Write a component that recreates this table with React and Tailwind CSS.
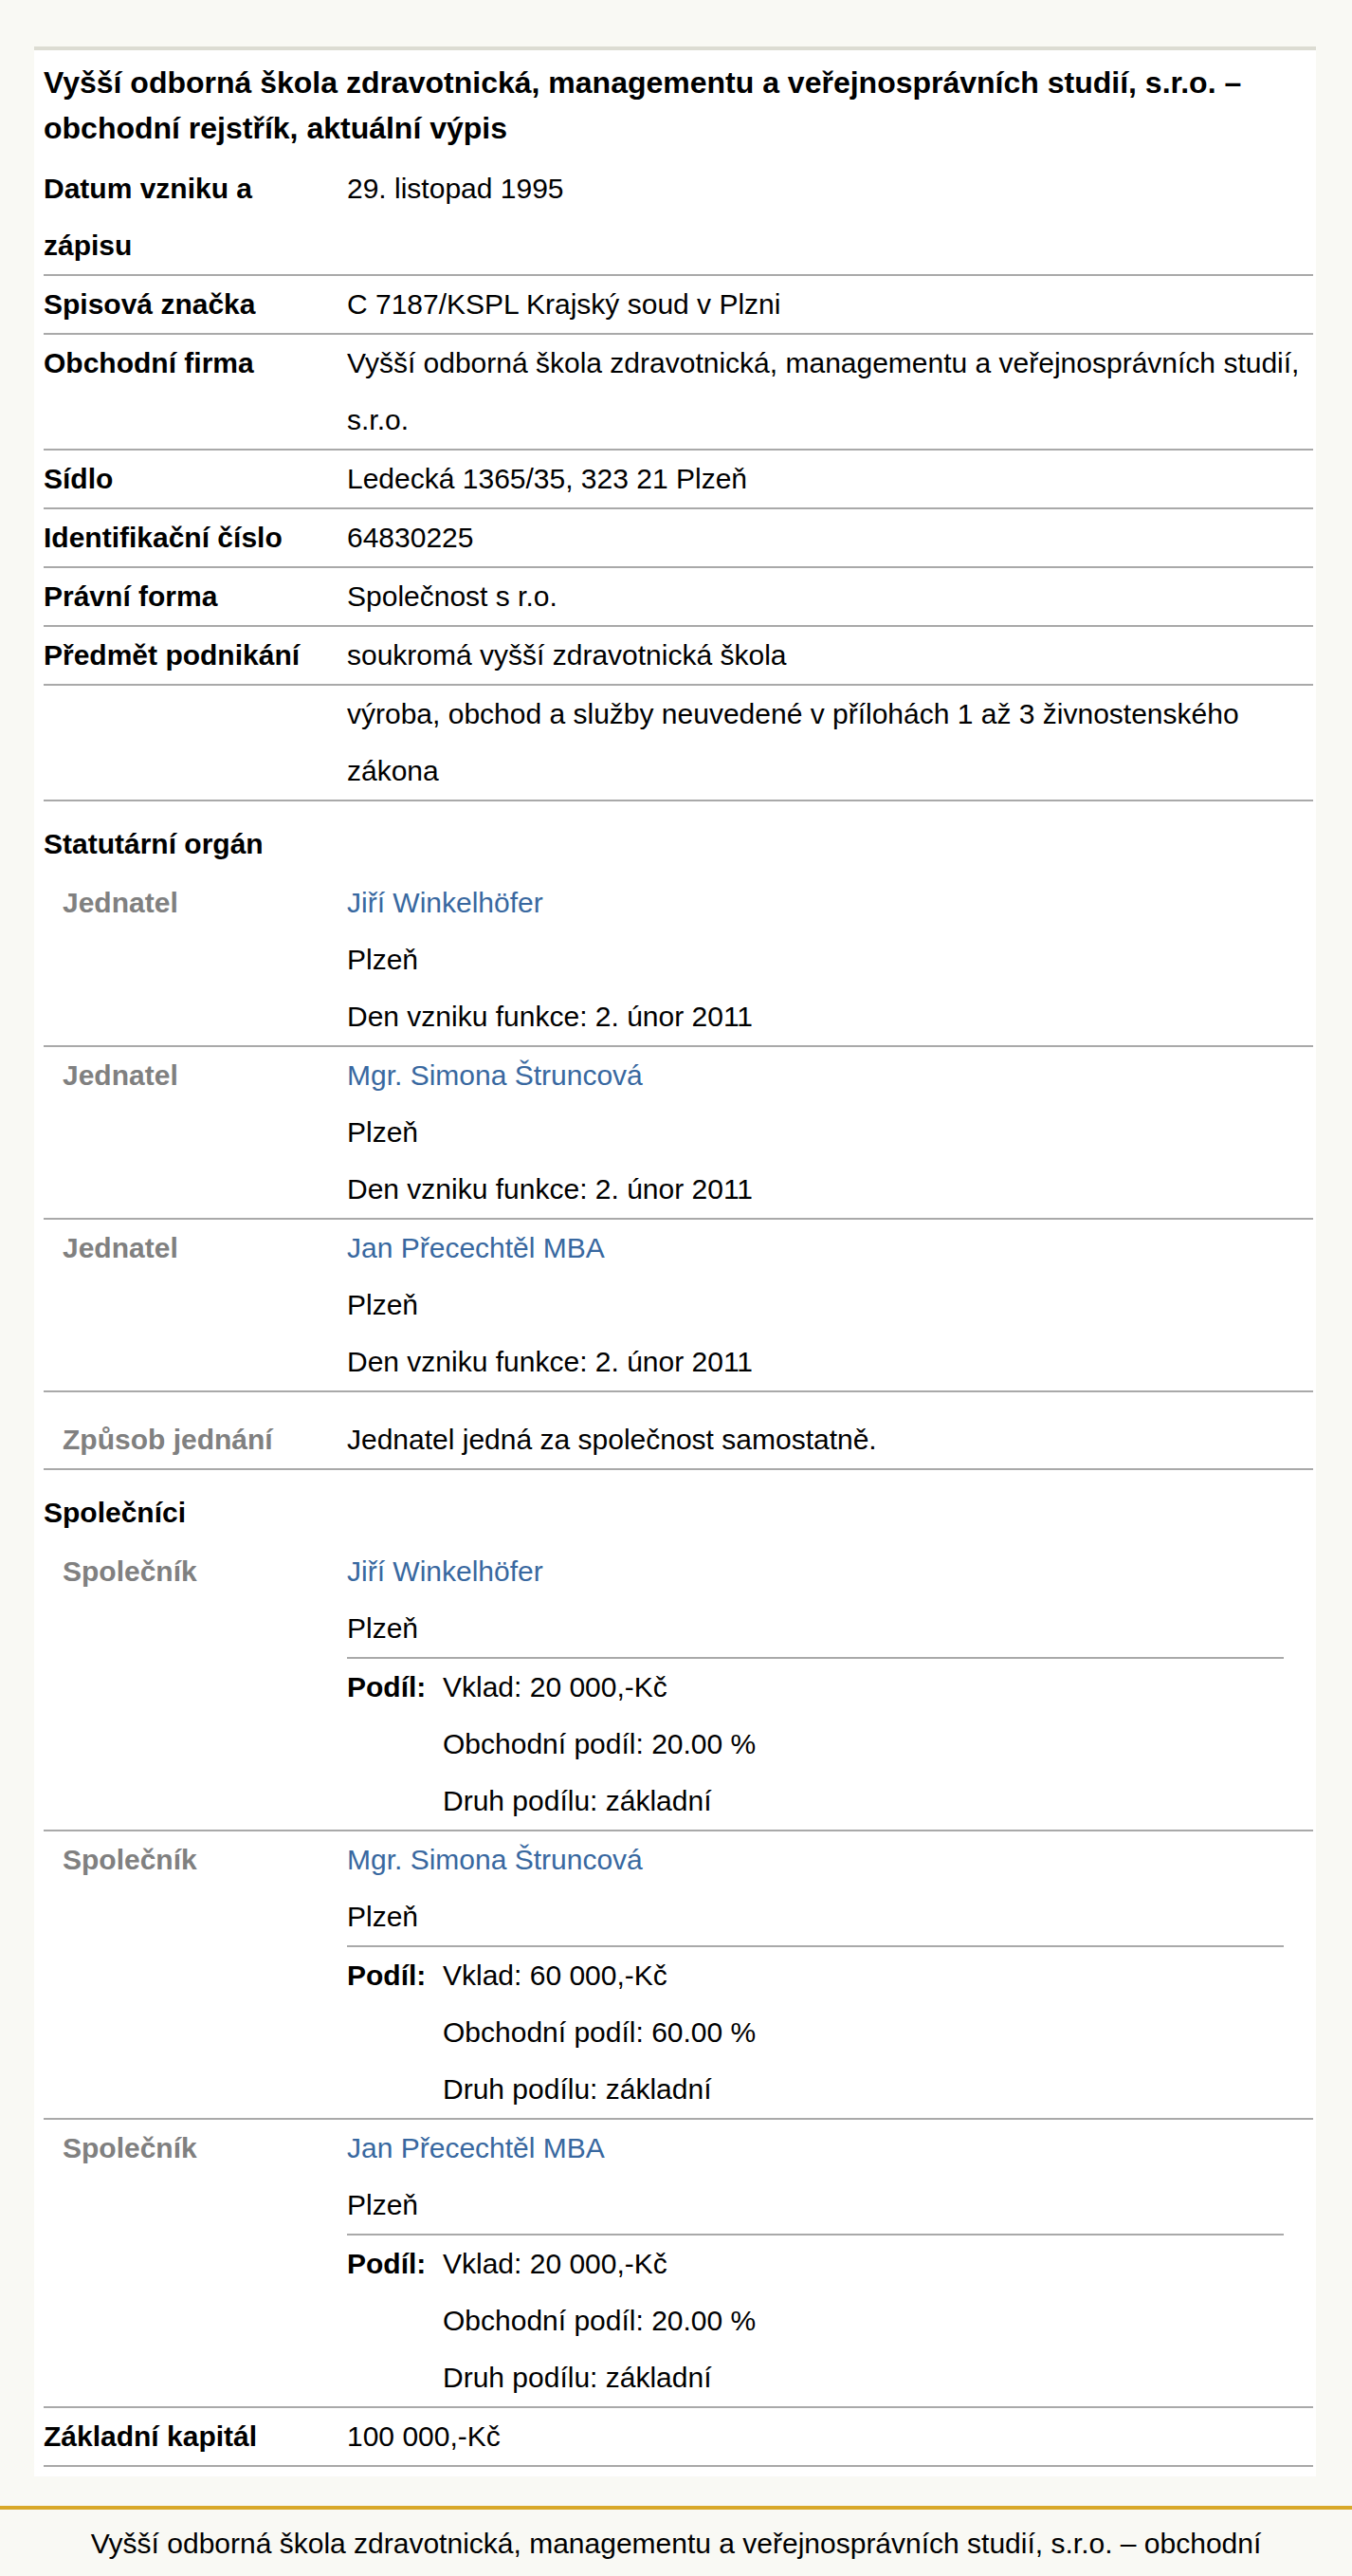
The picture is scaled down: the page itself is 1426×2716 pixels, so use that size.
import React from "react";

const line = "border-b-2 border-[#a9a9a9]";

function Row({ label, children, sub, className = "" }) {
    return (
        <div className={`flex ${line} ${className}`}>
            <div
                className={`w-[320px] shrink-0 pr-[20px] font-bold ${sub ? "pl-[20px] text-[#808080]" : ""}`}
            >
                {label}
            </div>
            <div className="flex-1 min-w-0">{children}</div>
        </div>
    );
}

function Person({ name }) {
    return <div className="text-[#3868a0]">{name}</div>;
}

function Section({ title }) {
    return <div className="pt-[15px] pb-[2px] font-bold">{title}</div>;
}

function Partner({ name, vklad, podil }) {
    return (
        <Row label="Společník" sub>
            <Person name={name} />
            <div>Plzeň</div>
            <div className="mr-[31px] flex border-t-2 border-[#a9a9a9]">
                <div className="w-[101px] shrink-0 font-bold">Podíl:</div>
                <div>
                    <div>Vklad: {vklad}</div>
                    <div>Obchodní podíl: {podil}</div>
                    <div>Druh podílu: základní</div>
                </div>
            </div>
        </Row>
    );
}

export default function App() {
    const firma = "Vyšší odborná škola zdravotnická, managementu a veřejnosprávních studií, s.r.o.";

    return (
        <div className="min-h-screen bg-[#f9f9f4] pt-[49px] text-[30px] leading-[60px] text-black font-['Liberation_Sans',Arial,sans-serif]">
            <div className="ml-[36px] w-[1352px] border-t-4 border-[#dcdcd2] bg-white pl-[10px] pr-[3px] pt-[10px] pb-[10px]">
                <h1 className="mb-[10px] text-[32px] font-bold leading-[48px]">
                    {firma} – obchodní rejstřík, aktuální výpis
                </h1>

                <Row label="Datum vzniku a zápisu">29. listopad 1995</Row>
                <Row label="Spisová značka">C 7187/KSPL Krajský soud v Plzni</Row>
                <Row label="Obchodní firma">{firma}</Row>
                <Row label="Sídlo">Ledecká 1365/35, 323 21 Plzeň</Row>
                <Row label="Identifikační číslo">64830225</Row>
                <Row label="Právní forma">Společnost s r.o.</Row>
                <Row label="Předmět podnikání">soukromá vyšší zdravotnická škola</Row>
                <Row label="">
                    výroba, obchod a služby neuvedené v přílohách 1 až 3 živnostenského zákona
                </Row>

                <Section title="Statutární orgán" />
                {["Jiří Winkelhöfer", "Mgr. Simona Štruncová", "Jan Přecechtěl MBA"].map((n) => (
                    <Row key={n} label="Jednatel" sub>
                        <Person name={n} />
                        <div>Plzeň</div>
                        <div>Den vzniku funkce: 2. únor 2011</div>
                    </Row>
                ))}
                <Row label="Způsob jednání" sub className="pt-[20px]">
                    Jednatel jedná za společnost samostatně.
                </Row>

                <Section title="Společníci" />
                <Partner name="Jiří Winkelhöfer" vklad="20 000,-Kč" podil="20.00 %" />
                <Partner name="Mgr. Simona Štruncová" vklad="60 000,-Kč" podil="60.00 %" />
                <Partner name="Jan Přecechtěl MBA" vklad="20 000,-Kč" podil="20.00 %" />

                <Row label="Základní kapitál">100 000,-Kč</Row>
            </div>

            <footer className="mt-[31px] border-t-4 border-[#d8a829] px-[50px] pt-[6px] pb-[20px] text-center">
                {firma} – obchodní rejstřík, aktuální výpis
            </footer>
        </div>
    );
}
